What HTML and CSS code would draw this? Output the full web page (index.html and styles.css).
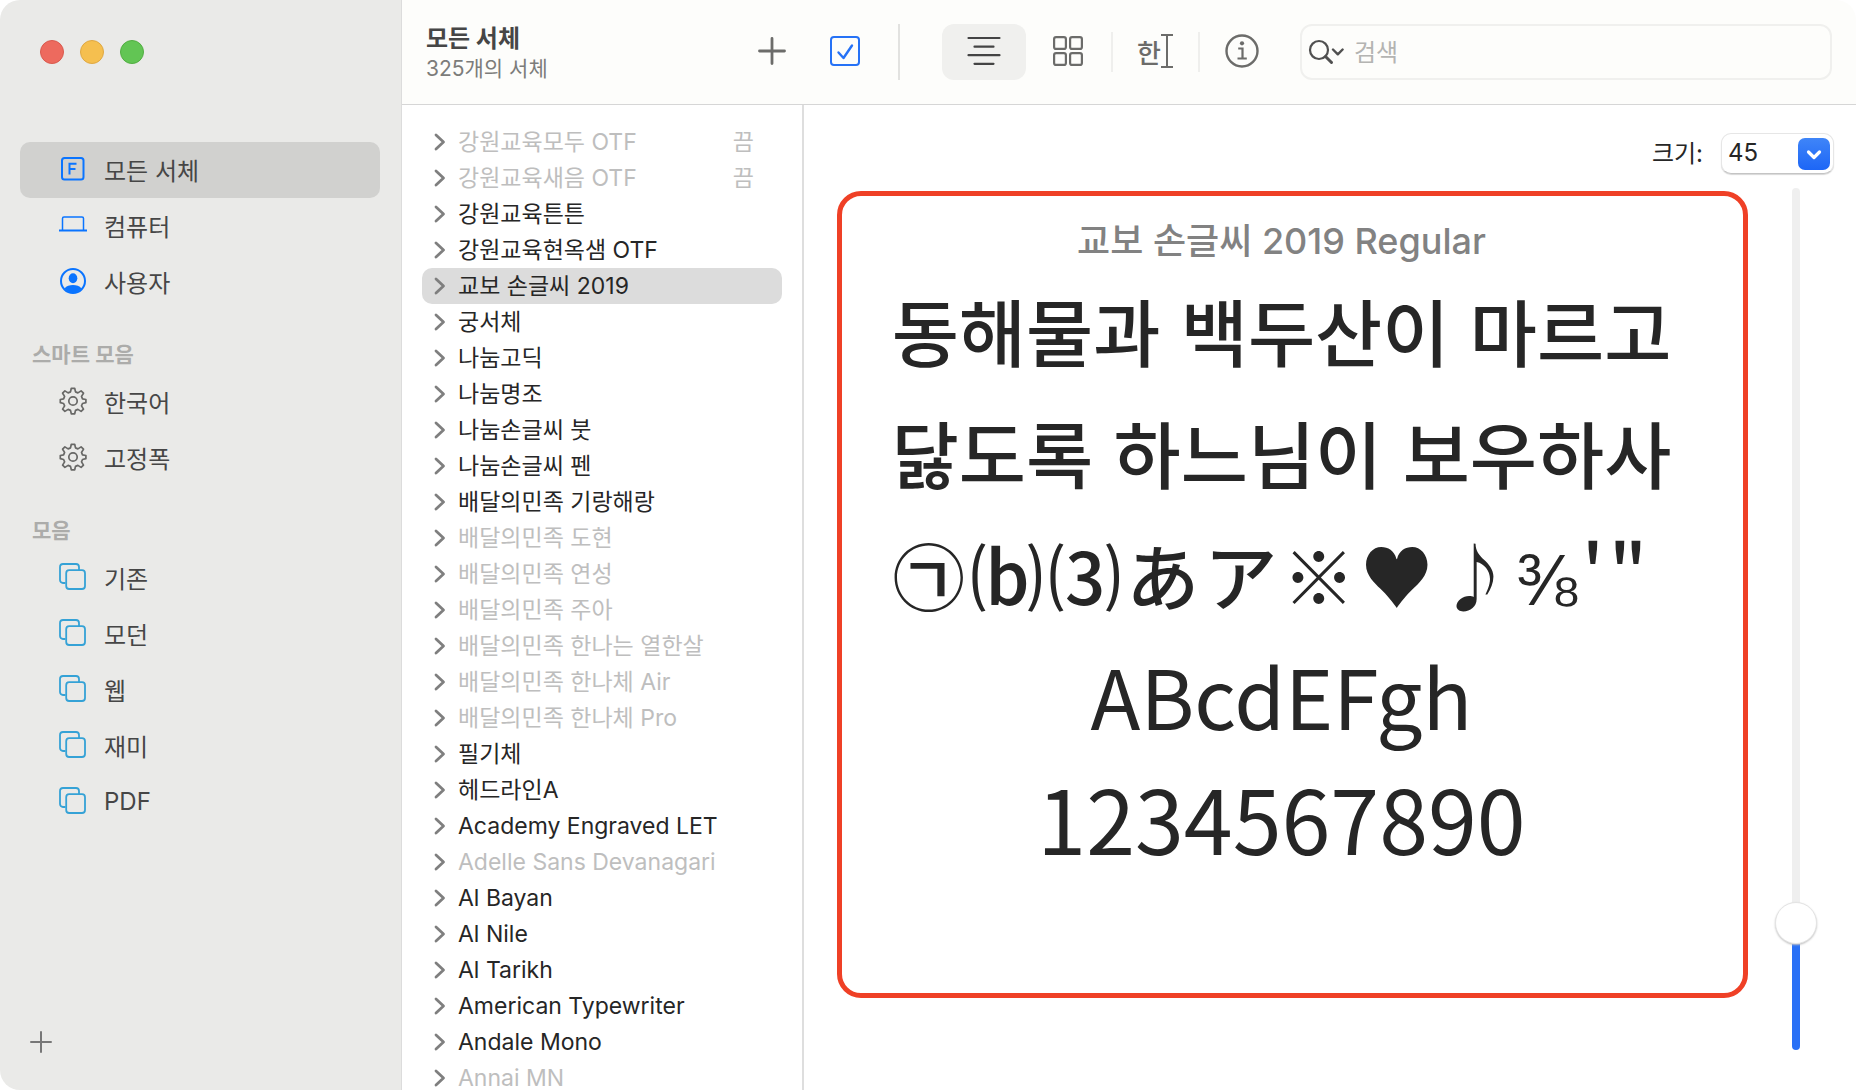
FILE: index.html
```html
<!DOCTYPE html>
<html lang="ko">
<head>
<meta charset="utf-8">
<meta name="viewport" content="width=device-width, initial-scale=1">
<title>서체 관리자</title>
<link rel="stylesheet" href="styles.css">
</head>
<body>
<svg class="sprite" aria-hidden="true">
  <symbol id="chevron" viewBox="0 0 12 18"><path d="M2 2l7.500 7L2 16" fill="none" stroke="currentColor" stroke-width="2.800" stroke-linecap="round" stroke-linejoin="round"/></symbol>
  <symbol id="stack" viewBox="0 0 28 28"><path d="M6.500 20H4a3 3 0 0 1-3-3V4a3 3 0 0 1 3-3h13a3 3 0 0 1 3 3v3" fill="none" stroke="currentColor" stroke-width="1.800"/><rect x="7.200" y="7.200" width="18.800" height="18.800" rx="3" fill="none" stroke="currentColor" stroke-width="1.800"/></symbol>
  <symbol id="gear" viewBox="0 0 28 28"><g fill="none" stroke="currentColor" stroke-width="1.700" stroke-linejoin="round"><circle cx="14" cy="14" r="4.200"/><path d="M12.300 1.300h3.400l.8 3.600 2.400 1 3.200-2 2.400 2.300-2 3.200 1 2.400 3.400.7v3.200l-3.400.8-1 2.400 2 3.200-2.400 2.300-3.200-2-2.400 1-.8 3.400h-3.400l-.8-3.400-2.400-1-3.200 2-2.300-2.300 2-3.200-1-2.400-3.300-.8v-3.200l3.300-.7 1-2.400-2-3.200 2.300-2.300 3.200 2 2.400-1z"/></g></symbol>
</svg>
<div class="window">
  <aside class="sidebar">
    <div class="lights">
      <button class="light light-close" aria-label="닫기"></button>
      <button class="light light-min" aria-label="최소화"></button>
      <button class="light light-max" aria-label="확대"></button>
    </div>
    <nav class="nav">
      <a class="item selected" href="#all"><svg class="icon blue" viewBox="0 0 28 28"><rect x="3" y="3" width="21.500" height="21.500" rx="2.500" fill="none" stroke="currentColor" stroke-width="2"/><path d="M10.500 19.500V8.700h7M10.500 14h6" fill="none" stroke="currentColor" stroke-width="2"/></svg>모든 서체</a>
      <a class="item" href="#computer"><svg class="icon blue" viewBox="0 0 28 28"><path d="M3.500 19V7.500a1.500 1.500 0 0 1 1.500-1.500h18a1.500 1.500 0 0 1 1.500 1.500V19" fill="none" stroke="currentColor" stroke-width="1.500"/><path d="M0 19.500h28" stroke="currentColor" stroke-width="2"/></svg>컴퓨터</a>
      <a class="item" href="#user"><svg class="icon blue" viewBox="0 0 28 28"><circle cx="14" cy="14" r="12" fill="none" stroke="currentColor" stroke-width="2"/><ellipse cx="14" cy="11.300" rx="4.300" ry="5" fill="currentColor"/><path d="M5.500 21.500c2-3 5-3.500 8.500-3.500s6.500.5 8.500 3.500A12 12 0 0 1 14 26a12 12 0 0 1-8.500-4.500z" fill="currentColor"/></svg>사용자</a>
      <h2 class="group">스마트 모음</h2>
      <a class="item" href="#korean"><svg class="icon gray"><use href="#gear"/></svg>한국어</a>
      <a class="item" href="#fixed"><svg class="icon gray"><use href="#gear"/></svg>고정폭</a>
      <h2 class="group">모음</h2>
      <a class="item" href="#classic"><svg class="icon teal"><use href="#stack"/></svg>기존</a>
      <a class="item" href="#modern"><svg class="icon teal"><use href="#stack"/></svg>모던</a>
      <a class="item" href="#web"><svg class="icon teal"><use href="#stack"/></svg>웹</a>
      <a class="item" href="#fun"><svg class="icon teal"><use href="#stack"/></svg>재미</a>
      <a class="item" href="#pdf"><svg class="icon teal"><use href="#stack"/></svg>PDF</a>
    </nav>
    <button class="add-group" aria-label="모음 추가"><svg width="22" height="22" viewBox="0 0 22 22"><path d="M11 1v20M1 11h20" stroke="currentColor" stroke-width="2" stroke-linecap="round"/></svg></button>
  </aside>

  <div class="main">
    <header class="toolbar">
      <div class="heading">
        <h1 class="title">모든 서체</h1>
        <p class="subtitle">325개의 서체</p>
      </div>
      <button class="tool tool-add" aria-label="서체 추가"><svg width="28" height="28" viewBox="0 0 28 28"><path d="M14 1.500v25M1.500 14h25" stroke="currentColor" stroke-width="2.800" stroke-linecap="round"/></svg></button>
      <input class="enable" type="checkbox" checked aria-label="서체 활성화">
      <span class="rule rule-tall"></span>
      <div class="tools">
        <button class="tool active" aria-label="견본"><svg width="34" height="30" viewBox="0 0 34 30"><path d="M1.500 2h31M7.500 10.700h19M1.500 19.200h31M7.500 27.800h19" stroke="currentColor" stroke-width="2.200" stroke-linecap="round"/></svg></button>
        <button class="tool" aria-label="레퍼토리"><svg width="30" height="30" viewBox="0 0 30 30"><g fill="none" stroke="currentColor" stroke-width="2.200"><rect x="1.100" y="1.100" width="11.800" height="11.800" rx="2"/><rect x="17.100" y="1.100" width="11.800" height="11.800" rx="2"/><rect x="1.100" y="17.100" width="11.800" height="11.800" rx="2"/><rect x="17.100" y="17.100" width="11.800" height="11.800" rx="2"/></g></svg></button>
        <span class="rule"></span>
        <button class="tool tool-text" aria-label="사용자 설정">한<svg width="12" height="36" viewBox="0 0 12 36"><path d="M0 2h12M0 34h12M6 2v32" stroke="currentColor" stroke-width="2"/></svg></button>
        <span class="rule"></span>
        <button class="tool" aria-label="정보"><svg width="34" height="34" viewBox="0 0 34 34"><circle cx="17" cy="17" r="15.500" fill="none" stroke="currentColor" stroke-width="2.400"/><circle cx="17" cy="9.300" r="2.100" fill="currentColor"/><path d="M13.200 14.500h4.300v9.800M12.500 24.500h9.300" fill="none" stroke="currentColor" stroke-width="2.200"/></svg></button>
      </div>
      <label class="search">
        <svg width="36" height="26" viewBox="0 0 36 26"><circle cx="11" cy="11" r="9" fill="none" stroke="currentColor" stroke-width="2.200"/><path d="M17.500 17.500l6 6" stroke="currentColor" stroke-width="3" stroke-linecap="round"/><path d="M25 10.500l4.800 4.800 4.800-4.800" fill="none" stroke="currentColor" stroke-width="2.400" stroke-linecap="round" stroke-linejoin="round"/></svg>
        <input class="search-input" type="search" placeholder="검색" aria-label="검색">
      </label>
    </header>

    <div class="content">
      <ul class="fonts">
        <li class="font off"><svg class="chev"><use href="#chevron"/></svg><span>강원교육모두 OTF</span><span class="state">끔</span></li>
        <li class="font off"><svg class="chev"><use href="#chevron"/></svg><span>강원교육새음 OTF</span><span class="state">끔</span></li>
        <li class="font"><svg class="chev"><use href="#chevron"/></svg><span>강원교육튼튼</span></li>
        <li class="font"><svg class="chev"><use href="#chevron"/></svg><span>강원교육현옥샘 OTF</span></li>
        <li class="font selected"><svg class="chev"><use href="#chevron"/></svg><span>교보 손글씨 2019</span></li>
        <li class="font"><svg class="chev"><use href="#chevron"/></svg><span>궁서체</span></li>
        <li class="font"><svg class="chev"><use href="#chevron"/></svg><span>나눔고딕</span></li>
        <li class="font"><svg class="chev"><use href="#chevron"/></svg><span>나눔명조</span></li>
        <li class="font"><svg class="chev"><use href="#chevron"/></svg><span>나눔손글씨 붓</span></li>
        <li class="font"><svg class="chev"><use href="#chevron"/></svg><span>나눔손글씨 펜</span></li>
        <li class="font"><svg class="chev"><use href="#chevron"/></svg><span>배달의민족 기랑해랑</span></li>
        <li class="font off"><svg class="chev"><use href="#chevron"/></svg><span>배달의민족 도현</span></li>
        <li class="font off"><svg class="chev"><use href="#chevron"/></svg><span>배달의민족 연성</span></li>
        <li class="font off"><svg class="chev"><use href="#chevron"/></svg><span>배달의민족 주아</span></li>
        <li class="font off"><svg class="chev"><use href="#chevron"/></svg><span>배달의민족 한나는 열한살</span></li>
        <li class="font off"><svg class="chev"><use href="#chevron"/></svg><span>배달의민족 한나체 Air</span></li>
        <li class="font off"><svg class="chev"><use href="#chevron"/></svg><span>배달의민족 한나체 Pro</span></li>
        <li class="font"><svg class="chev"><use href="#chevron"/></svg><span>필기체</span></li>
        <li class="font"><svg class="chev"><use href="#chevron"/></svg><span>헤드라인A</span></li>
        <li class="font"><svg class="chev"><use href="#chevron"/></svg><span>Academy Engraved LET</span></li>
        <li class="font off"><svg class="chev"><use href="#chevron"/></svg><span>Adelle Sans Devanagari</span></li>
        <li class="font"><svg class="chev"><use href="#chevron"/></svg><span>Al Bayan</span></li>
        <li class="font"><svg class="chev"><use href="#chevron"/></svg><span>Al Nile</span></li>
        <li class="font"><svg class="chev"><use href="#chevron"/></svg><span>Al Tarikh</span></li>
        <li class="font"><svg class="chev"><use href="#chevron"/></svg><span>American Typewriter</span></li>
        <li class="font"><svg class="chev"><use href="#chevron"/></svg><span>Andale Mono</span></li>
        <li class="font off"><svg class="chev"><use href="#chevron"/></svg><span>Annai MN</span></li>
      </ul>

      <section class="preview">
        <div class="size">
          <label class="size-label" for="size">크기:</label>
          <select id="size" class="size-select"><option>45</option><option>64</option><option>72</option></select>
        </div>
        <div class="stage">
          <article class="sample">
            <h2 class="sample-name">교보 손글씨 2019 Regular</h2>
            <p class="line">동해물과 백두산이 마르고</p>
            <p class="line">닳도록 하느님이 보우하사</p>
            <p class="line symbols"><span>㉠</span><span>⒝</span><span>⑶</span><span>あ</span><span>ア</span><span>※</span><span>♥</span><span>♪</span><span>⅜</span><span>'</span><span>"</span></p>
            <p class="line letters">ABcdEFgh</p>
            <p class="line digits">1234567890</p>
          </article>
          <input class="zoom" type="range" min="9" max="288" value="45" aria-label="크기">
        </div>
      </section>
    </div>
  </div>
</div>
</body>
</html>
```
FILE: styles.css
```css
* { box-sizing: border-box; }

body {
  margin: 0;
  background: #fff;
  color: #262626;
  font-family: Inter, "Noto Sans CJK KR", sans-serif;
  font-size: 24px;
}

h1, h2, p, ul { margin: 0; padding: 0; }
button { padding: 0; border: 0; background: none; font: inherit; color: inherit; }
.sprite { position: absolute; width: 0; height: 0; }

.window {
  display: flex;
  height: 100vh;
  border-radius: 20px;
  overflow: hidden;
}

/* Sidebar */
.sidebar {
  display: flex;
  flex-direction: column;
  flex: 0 0 402px;
  padding: 40px 21px 37px 20px;
  background: #eaeae8;
  border-right: 1px solid #dcdcdc;
}
.lights { display: flex; gap: 16px; padding-left: 20px; }
.light { width: 24px; height: 24px; border: 1px solid; border-radius: 50%; }
.light-close { background: #ed6a5e; border-color: #d95a4e; }
.light-min { background: #f5bf4f; border-color: #dfa843; }
.light-max { background: #62c554; border-color: #52ae42; }
.nav { margin-top: 78px; color: #464646; }
.item {
  display: flex;
  align-items: center;
  gap: 17px;
  height: 56px;
  padding: 0 0 2px 39px;
  border-radius: 10px;
  color: inherit;
  text-decoration: none;
}
.item.selected { background: #d1d1cf; }
.icon { width: 28px; height: 28px; }
.blue { color: #0a74ff; }
.gray { color: #686866; }
.teal { color: #35a2d6; }
.group {
  height: 64px;
  padding: 27px 0 0 12px;
  color: #acacaa;
  font-size: 21px;
  font-weight: 600;
  line-height: 36px;
}
.add-group { display: flex; margin-top: auto; margin-left: 10px; align-self: flex-start; color: #777; }

/* Toolbar */
.main { display: flex; flex-direction: column; flex: 1; min-width: 0; }
.toolbar {
  display: flex;
  align-items: center;
  flex: 0 0 105px;
  padding: 0 24px;
  background: #fdfdfb;
  border-bottom: 1px solid #d6d6d6;
  color: #6c6c6a;
}
.heading { width: 304px; padding-top: 3px; }
.title { color: #464646; font-size: 24px; font-weight: 700; line-height: 30px; }
.subtitle { color: #7c7c7a; font-size: 21px; line-height: 30px; }
.tool {
  display: flex;
  align-items: center;
  justify-content: center;
  width: 84px;
  height: 56px;
  padding-bottom: 2px;
  border-radius: 12px;
}
.tool.active { background: #f0f0ee; color: #444; }
.tool-text { font-size: 26px; font-weight: 500; }
.enable {
  appearance: none;
  width: 30px;
  height: 30px;
  margin: 0 38px 2px 16px;
  border: 2px solid #2672f6;
  border-radius: 4px;
  background: url("data:image/svg+xml,%3Csvg xmlns='http://www.w3.org/2000/svg' viewBox='0 0 26 26'%3E%3Cpath d='M6.500 14.500l5 5.500L20 7.500' fill='none' stroke='%232672f6' stroke-width='2.400' stroke-linecap='round' stroke-linejoin='round'/%3E%3C/svg%3E") center / 26px;
}
.rule { width: 2px; height: 40px; margin-left: 1px; background: #efefed; }
.rule-tall { height: 56px; margin-left: 0; background: #e2e2e0; }
.tools { display: flex; align-items: center; margin: 0 16px 0 42px; }
.search {
  display: flex;
  align-items: center;
  flex: 1;
  min-width: 0;
  height: 56px;
  padding: 0 6px;
  gap: 10px;
  border: 2px solid #f0f0ee;
  border-radius: 12px;
  color: #505050;
}
.search-input {
  flex: 1;
  min-width: 0;
  padding: 0;
  border: 0;
  outline: 0;
  background: none;
  font: inherit;
}
.search-input::placeholder { color: #b4b4b2; }

/* Font list */
.content { display: flex; flex: 1; min-height: 0; }
.fonts {
  flex: 0 0 402px;
  padding: 19px 20px 0;
  border-right: 2px solid #dedede;
  list-style: none;
  font-size: 23px;
  overflow: hidden;
}
.font {
  display: flex;
  align-items: center;
  height: 36px;
  padding: 0 28px 0 12px;
  gap: 12px;
  border-radius: 10px;
  line-height: 36px;
  white-space: nowrap;
}
.font.selected { background: #dcdcdc; }
.font.off { color: #bebebe; }
.chev { width: 12px; height: 18px; color: #7f7f7f; }
.state { margin-left: auto; }

/* Preview */
.preview { display: flex; flex-direction: column; flex: 1; min-width: 0; padding: 28px 22px 40px 33px; }
.size { display: flex; align-items: center; justify-content: flex-end; gap: 18px; }
.size-label { padding-bottom: 4px; }
.size-select {
  appearance: none;
  width: 113px;
  height: 41px;
  padding: 0 6px 2px;
  border: 1px solid #e6e6e6;
  border-bottom-color: #c4c4c4;
  border-radius: 10px;
  background: #fff url("data:image/svg+xml,%3Csvg xmlns='http://www.w3.org/2000/svg' viewBox='0 0 32 32'%3E%3Cdefs%3E%3ClinearGradient id='g' x2='0' y2='1'%3E%3Cstop stop-color='%233f85f8'/%3E%3Cstop offset='1' stop-color='%231d66f6'/%3E%3C/linearGradient%3E%3C/defs%3E%3Crect width='32' height='32' rx='7' fill='url(%23g)'/%3E%3Cpath d='M10.500 14l5.500 5.500 5.500-5.500' fill='none' stroke='white' stroke-width='3.200' stroke-linecap='round' stroke-linejoin='round'/%3E%3C/svg%3E") no-repeat right 3px center / 32px;
  box-shadow: 0 1px 1px #d8d8d8;
  color: inherit;
  font: inherit;
}
.stage { display: flex; flex: 1; min-height: 0; gap: 27px; padding: 14px 17px 0 0; }
.sample {
  flex: 1;
  min-width: 0;
  margin: 3px 0 52px;
  padding: 18px 22px 0 0;
  border: 5px solid #ef4026;
  border-radius: 24px;
  text-align: center;
  overflow: hidden;
}
.sample-name { color: #828282; font-size: 36px; font-weight: 500; line-height: 54px; }
.line {
  font-family: "Noto Sans CJK KR", sans-serif;
  font-size: 73px;
  font-weight: 500;
  line-height: 122px;
  white-space: nowrap;
}
.symbols { display: flex; justify-content: center; gap: 5px; padding-right: 24px; }
.letters { font-size: 82px; font-weight: 400; }
.digits { font-size: 88px; font-weight: 400; }

.zoom {
  appearance: none;
  writing-mode: vertical-lr;
  direction: rtl;
  width: 42px;
  height: 100%;
  margin: 0;
  background: none;
}
.zoom::-webkit-slider-runnable-track {
  width: 8px;
  height: 100%;
  border-radius: 4px;
  background: linear-gradient(to top, #2870f6 14%, #efefef 14%);
}
.zoom::-webkit-slider-thumb {
  appearance: none;
  width: 42px;
  height: 42px;
  margin-left: -17px;
  border: 1px solid #e4e4e4;
  border-radius: 50%;
  background: #fff;
  box-shadow: 0 1px 2px #c4c4c4;
}
```
